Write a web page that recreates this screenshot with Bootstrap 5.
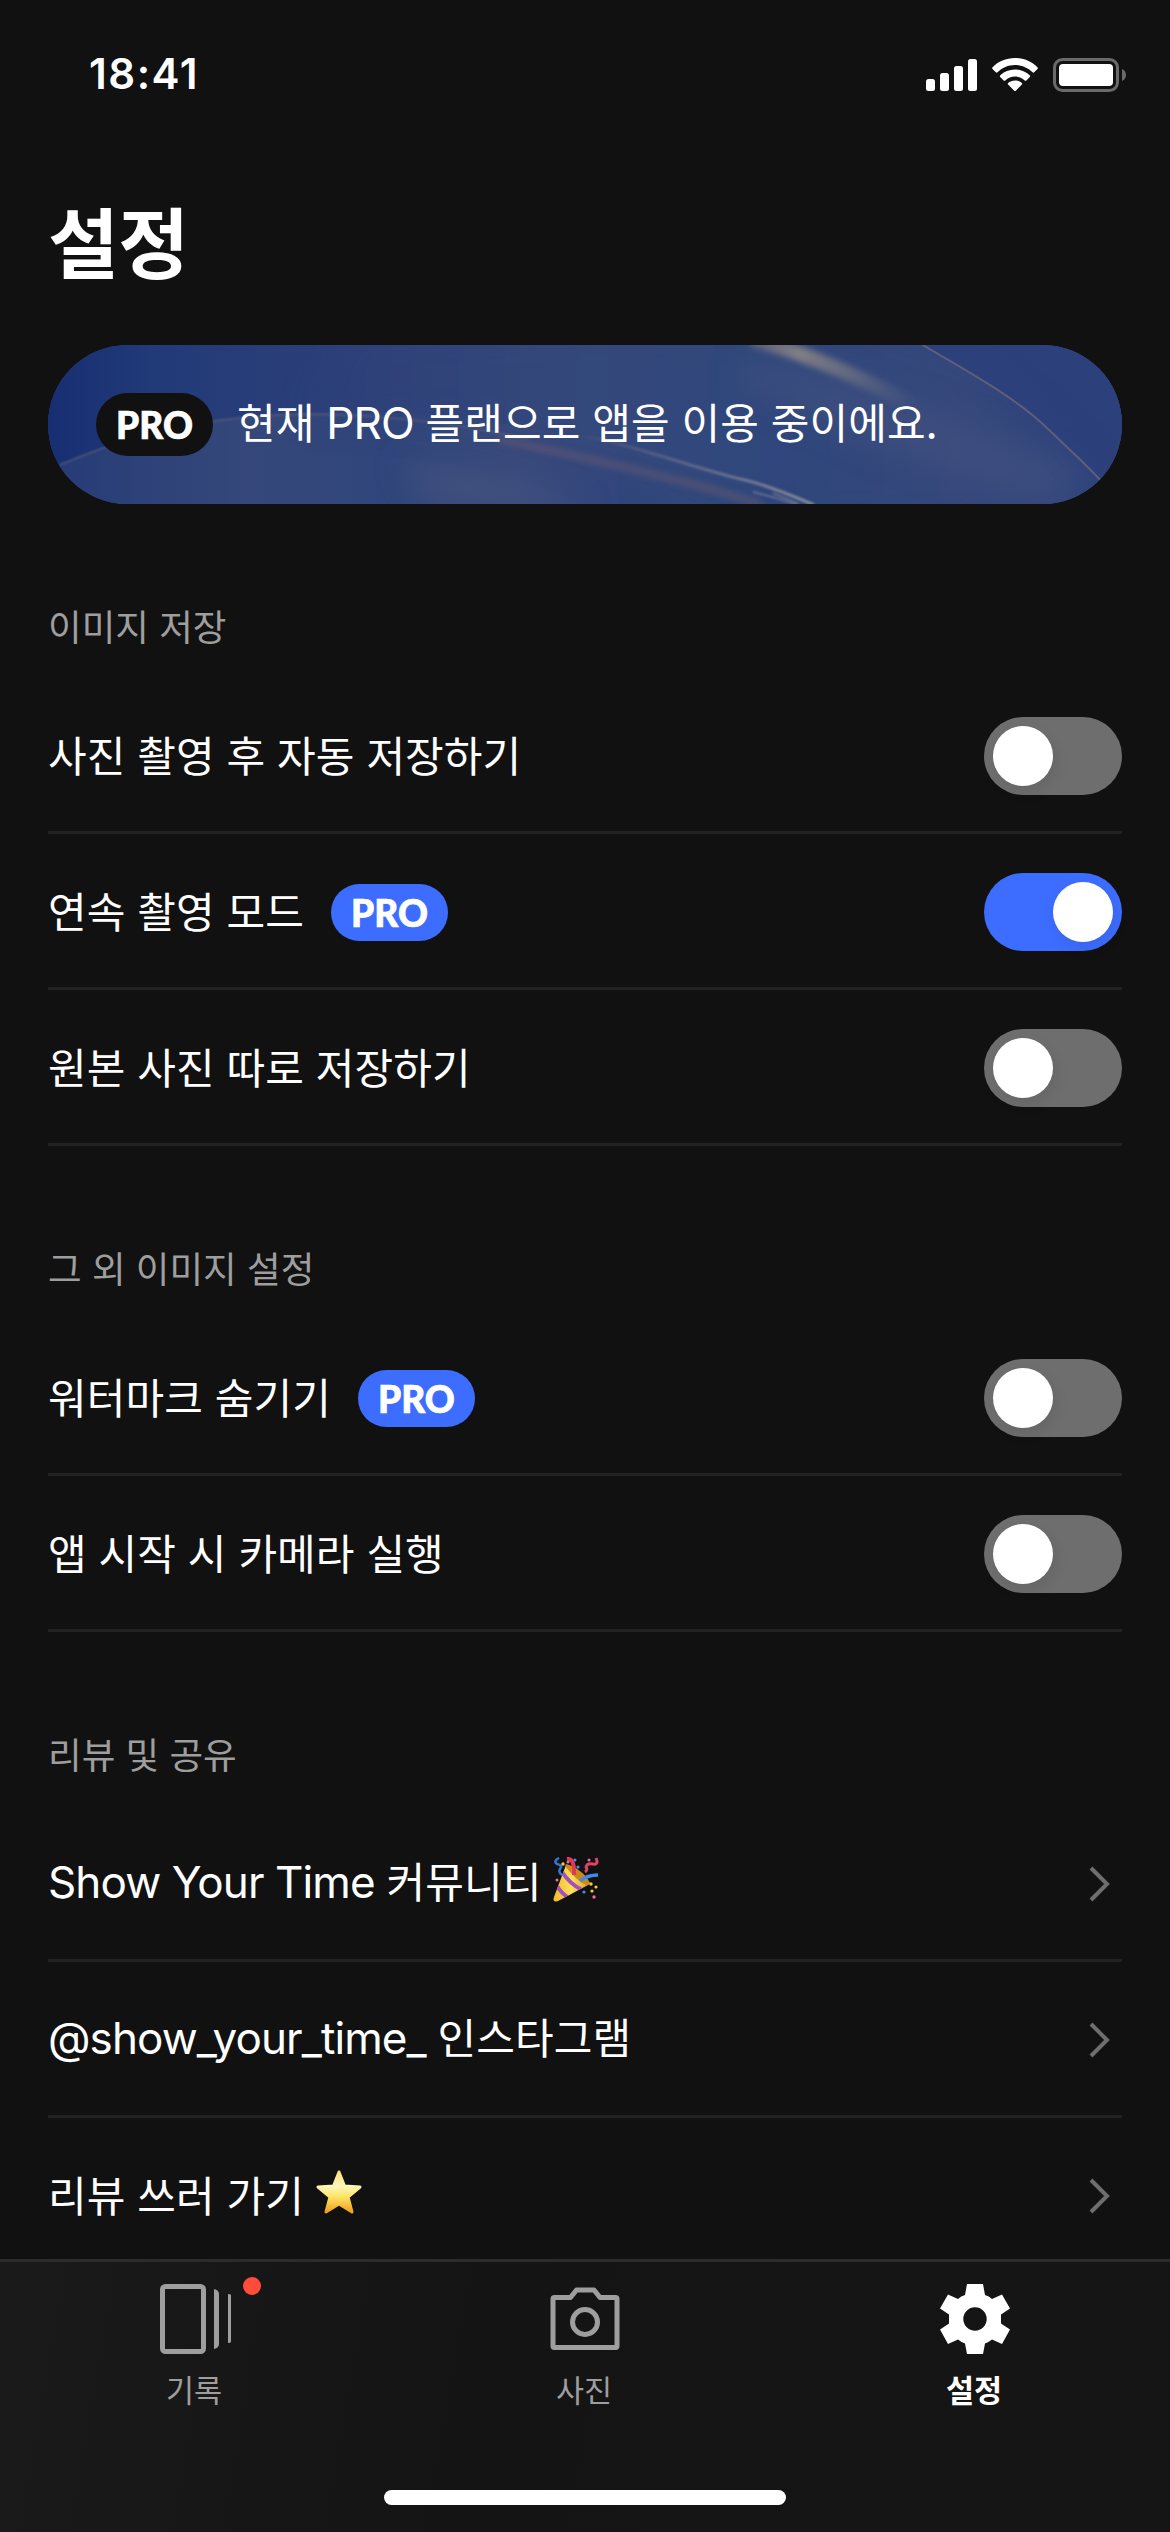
<!DOCTYPE html>
<html lang="ko" data-bs-theme="dark">
<head>
<meta charset="utf-8">
<meta name="viewport" content="width=device-width, initial-scale=1">
<title>설정</title>
<link href="https://cdn.jsdelivr.net/npm/bootstrap@5.3.0/dist/css/bootstrap.min.css" rel="stylesheet">
<style>
  :root { --ui-blue: #3d6dff; --ui-bg: #111; --ui-gray: #9e9e9e; }
  html, body { height: 2532px; overflow: hidden; }
  body { background: var(--ui-bg); color: #fff; font-family: "Noto Sans CJK KR", sans-serif; font-size: 42px; line-height: 1; }
  svg { display: block; flex: none; }
  .screen { width: 1170px; height: 2532px; }
  .status { height: 150px; padding: 0 44px 0 89px; }
  .clock { font: 600 42px/1 Inter, sans-serif; letter-spacing: 1.5px; padding-bottom: 3px; }
  .status-icons { gap: 15px; }
  .page-title { font-size: 77px; font-weight: 700; line-height: 90px; letter-spacing: -.6px; margin: 45px 0 60px; }
  .side { padding: 0 48px; }
  .plan { height: 159px; border-radius: 80px; padding: 0 48px; gap: 24px; background: #2f4680; position: relative; overflow: hidden; }
  .plan > * { position: relative; }
  .plan > .plan-art { position: absolute; left: 0; top: 0; }
  .pro { width: 117px; height: 57px; border-radius: 29px; background: var(--ui-blue); font: 900 37px/1 Lato, sans-serif; -webkit-text-stroke: .7px #fff; }
  .pro-dark { height: 63px; border-radius: 32px; background: var(--ui-bg); }
  .sect-name { height: 174px; padding-top: 103px; font-size: 36.6px; line-height: 38px; color: var(--ui-gray); font-weight: 400; margin: 0; }
  .setting { height: 156px; border-bottom: 3px solid #222; padding-top: 3px; gap: 27px; }
  .linkrow { gap: 12px; padding-right: 12px; }
  .linkrow .emoji { margin-bottom: 8px; }
  .label { white-space: nowrap; padding-bottom: 5px; letter-spacing: .08px; }
  .lat { font-family: Inter, sans-serif; font-size: 44px; letter-spacing: -.9px; }
  .toggle { width: 138px; height: 78px; border-radius: 39px; padding: 9px; background: #6e6e6e; }
  .toggle.on { background: var(--ui-blue); }
  .knob { width: 60px; height: 60px; border-radius: 50%; background: #fff; box-shadow: 3px 6px 15px rgba(0,0,0,.08); }
  .tabs { height: 273px; border-top: 3px solid #2c2c2c; background: linear-gradient(100deg, #1a1a1a 0, #141414 40%, #151515 100%); }
  .tab-item { color: var(--ui-gray); padding-top: 21px; font-size: 30.5px; }
  .tab-item.current { color: #fff; font-weight: 700; }
  .tab-text { line-height: 44px; margin-top: 12px; padding-right: 2px; }
  .tab-dot { position: absolute; width: 18px; height: 18px; border-radius: 50%; background: #ff4c3a; left: 84px; top: -6px; }
  .home { width: 402px; height: 15px; border-radius: 8px; background: #fff; margin-bottom: 27px; }
</style>
<script src="https://cdn.jsdelivr.net/npm/bootstrap@5.3.0/dist/js/bootstrap.bundle.min.js"></script>
</head>
<body>
<div class="screen d-flex flex-column">
  <header class="status d-flex align-items-center justify-content-between flex-shrink-0">
    <div class="clock">18:41</div>
    <div class="status-icons d-flex align-items-center">
      <svg width="51" height="34" viewBox="0 0 51 34" fill="#fff"><rect y="21" width="9" height="12" rx="2.5"/><rect x="14" y="15" width="9" height="18" rx="2.5"/><rect x="28" y="8" width="9" height="25" rx="2.5"/><rect x="42" y="1" width="9" height="32" rx="2.5"/></svg>
      <svg width="46" height="34" viewBox="0 0 46 34" fill="#fff"><path d="M23 0C32 0 40 3.500 45.400 9.200c.6.600.6 1.200.1 1.800l-3.300 3.300c-.5.500-1.200.5-1.700 0C35.900 9.800 29.800 7 23 7S10.100 9.800 5.500 14.300c-.5.500-1.200.5-1.700 0L.5 11c-.5-.6-.5-1.200.1-1.800C6 3.500 14 0 23 0z"/><path d="M23 11.500c5.700 0 10.900 2.200 14.700 5.800.6.500.6 1.200.1 1.700l-3.400 3.400c-.5.500-1.100.5-1.700.1C30.100 20 26.700 18.500 23 18.500s-7.100 1.500-9.700 4c-.6.400-1.200.4-1.700-.1L8.200 19c-.5-.5-.5-1.200.1-1.700C12.100 13.700 17.300 11.500 23 11.500z"/><path d="M23 22.500c2.700 0 5.100 1 6.900 2.500.5.500.5 1.100 0 1.600l-6.100 6.100c-.5.500-1.100.5-1.600 0l-6.100-6.100c-.5-.5-.5-1.100 0-1.600 1.800-1.500 4.200-2.500 6.900-2.500z"/></svg>
      <svg width="73" height="34" viewBox="0 0 73 34"><rect x="1.500" y="1.500" width="63" height="31" rx="8" fill="none" stroke="#6a6a6a" stroke-width="3"/><rect x="6" y="6" width="54" height="22" rx="4" fill="#fff"/><path d="M69 11c2.500 1 4 3.300 4 6s-1.500 5-4 6z" fill="#6a6a6a"/></svg>
    </div>
  </header>

  <main class="side flex-grow-1 overflow-hidden">
    <h1 class="page-title">설정</h1>

    <section class="plan d-flex align-items-center">
      <svg class="plan-art" width="1074" height="159" viewBox="0 0 1074 159">
        <defs>
          <linearGradient id="base"><stop offset="0" stop-color="#172f72"/><stop offset=".1" stop-color="#213a78"/><stop offset=".32" stop-color="#30427a"/><stop offset=".6" stop-color="#2f477c"/><stop offset="1" stop-color="#2e427b"/></linearGradient>
          <linearGradient id="sweep"><stop offset="0" stop-color="#2b3f78"/><stop offset=".35" stop-color="#3a4b7b"/><stop offset=".6" stop-color="#30477c"/><stop offset=".82" stop-color="#3d4d7d"/><stop offset="1" stop-color="#33467e"/></linearGradient>
          <linearGradient id="ray" gradientUnits="userSpaceOnUse" x1="695" y1="0" x2="870" y2="60"><stop offset="0" stop-color="#7a7580" stop-opacity=".5"/><stop offset=".3" stop-color="#8b8585" stop-opacity=".9"/><stop offset=".6" stop-color="#7d7c85" stop-opacity=".6"/><stop offset="1" stop-color="#6d7084" stop-opacity="0"/></linearGradient>
          <linearGradient id="thread" gradientUnits="userSpaceOnUse" x1="520" y1="0" x2="765" y2="0"><stop offset="0" stop-color="#6f728c" stop-opacity="0"/><stop offset=".5" stop-color="#74778e" stop-opacity=".7"/><stop offset="1" stop-color="#8a8c9c"/></linearGradient>
          <filter id="b1" x="-10%" y="-20%" width="120%" height="140%"><feGaussianBlur stdDeviation=".8"/></filter>
          <filter id="b3" x="-20%" y="-30%" width="140%" height="160%"><feGaussianBlur stdDeviation="3"/></filter>
          <filter id="b16" x="-20%" y="-50%" width="140%" height="200%"><feGaussianBlur stdDeviation="16"/></filter>
        </defs>
        <rect width="1074" height="159" fill="url(#base)"/>
        <path d="M11 120C60 98 110 80 190 73C300 60 440 70 570 100V159H0z" fill="url(#sweep)" opacity=".75"/>
        <path d="M300 -20H870C950 38 1010 80 1052 132L1030 179H640C540 105 420 75 260 72z" fill="url(#sweep)" opacity=".55" filter="url(#b16)"/>
        <path d="M700 10C850 40 960 100 1040 130L1000 159C890 130 780 80 690 40z" fill="#475482" opacity=".5" filter="url(#b16)"/>
        <path d="M350 115C430 125 500 145 550 159H380z" fill="#596283" opacity=".35" filter="url(#b16)"/>
        <path d="M11 120C65 98 120 79 200 72S380 72 480 94" fill="none" stroke="#66637c" stroke-width="2" opacity=".55" filter="url(#b1)"/>
        <path d="M450 94C530 112 630 132 715 160" fill="none" stroke="#5e5773" stroke-width="8" opacity=".65" filter="url(#b3)"/>
        <path d="M520 88C590 100 640 122 697 135C722 141 745 151 766 160" fill="none" stroke="url(#thread)" stroke-width="3" filter="url(#b1)"/>
        <path d="M705 147C722 151 738 156 748 160M725 148L751 159" fill="none" stroke="#747894" stroke-width="1.600" filter="url(#b1)"/>
        <path d="M703 -6Q770 10 870 62" stroke="url(#ray)" stroke-width="15" fill="none" filter="url(#b3)"/>
        <path d="M868 -4C915 24 966 51 998 82S1036 117 1054 137L1090 150V-8z" fill="#2c407b" opacity=".85"/>
        <path d="M868 -4C915 24 966 51 998 82S1036 117 1054 137" fill="none" stroke="#5f5d7a" stroke-width="2"/>
      </svg>
      <span class="pro pro-dark d-flex align-items-center justify-content-center flex-shrink-0">PRO</span>
      <span class="label">현재 <span class="lat">PRO</span> 플랜으로 앱을 이용 중이에요.</span>
    </section>

    <section>
      <h2 class="sect-name">이미지 저장</h2>
      <div class="setting d-flex align-items-center"><span class="label">사진 촬영 후 자동 저장하기</span><span class="toggle d-flex ms-auto"><span class="knob"></span></span></div>
      <div class="setting d-flex align-items-center"><span class="label">연속 촬영 모드</span><span class="pro d-flex align-items-center justify-content-center">PRO</span><span class="toggle on d-flex justify-content-end ms-auto"><span class="knob"></span></span></div>
      <div class="setting d-flex align-items-center"><span class="label">원본 사진 따로 저장하기</span><span class="toggle d-flex ms-auto"><span class="knob"></span></span></div>
    </section>

    <section>
      <h2 class="sect-name">그 외 이미지 설정</h2>
      <div class="setting d-flex align-items-center"><span class="label">워터마크 숨기기</span><span class="pro d-flex align-items-center justify-content-center">PRO</span><span class="toggle d-flex ms-auto"><span class="knob"></span></span></div>
      <div class="setting d-flex align-items-center"><span class="label">앱 시작 시 카메라 실행</span><span class="toggle d-flex ms-auto"><span class="knob"></span></span></div>
    </section>

    <section>
      <h2 class="sect-name">리뷰 및 공유</h2>
      <div class="setting linkrow d-flex align-items-center"><span class="label"><span class="lat">Show Your Time</span> 커뮤니티</span>
        <svg class="emoji" width="46" height="46" viewBox="0 0 46 46">
          <defs><linearGradient id="cone" x1="0" x2="1"><stop offset="0" stop-color="#f3b928"/><stop offset=".5" stop-color="#ffe15a"/><stop offset="1" stop-color="#d99a1c"/></linearGradient><clipPath id="cc"><path d="M13 8L37 27 5 44Q-1 46 1 40z"/></clipPath></defs>
          <path d="M13 8L37 27 5 44Q-1 46 1 40z" fill="url(#cone)"/>
          <g clip-path="url(#cc)" stroke="#a34fc0" stroke-width="4" fill="none"><path d="M9 15Q17 27 29 33M4 29Q9 37 16 41"/></g>
          <path d="M13 7C22 9 33 17 37 26 35 31 27 25 21 19S11 9 13 7z" fill="#c98a1b"/>
          <path d="M14 2q8-1 7 16" fill="none" stroke="#e23a55" stroke-width="4"/>
          <path d="M27 24Q34 18 45 18" fill="none" stroke="#3f8ce8" stroke-width="3.500"/>
          <path d="M6 1q-6 3-2 6 6 1 3 5-2 3 2 6" fill="none" stroke="#3274d8" stroke-width="2.500"/>
          <path d="M43 1q3 7-3 6t-7 3q2 3-1 5" fill="none" stroke="#dd426b" stroke-width="3"/>
          <g fill="#f6cb33"><circle cx="10" cy="7" r="1.700"/><circle cx="38" cy="27" r="1.700"/><circle cx="43" cy="30" r="1.600"/><circle cx="39" cy="34" r="1.600"/></g><g fill="#4a8ee6"><circle cx="22" cy="3" r="1.500"/><circle cx="25" cy="10" r="1.600"/><circle cx="31" cy="35" r="1.600"/></g><g fill="#ef6a9d"><circle cx="15" cy="5" r="1.500"/><circle cx="4" cy="23" r="1.500"/><circle cx="41" cy="40" r="1.700"/><circle cx="36" cy="3" r="1.500"/></g>
        </svg>
        <svg class="chev ms-auto" width="22" height="36" viewBox="0 0 22 36"><path d="M3 2L19 18 3 34" fill="none" stroke="#6e6e6e" stroke-width="4"/></svg></div>
      <div class="setting linkrow d-flex align-items-center"><span class="label"><span class="lat">@show_your_time_</span> 인스타그램</span>
        <svg class="chev ms-auto" width="22" height="36" viewBox="0 0 22 36"><path d="M3 2L19 18 3 34" fill="none" stroke="#6e6e6e" stroke-width="4"/></svg></div>
      <div class="setting linkrow d-flex align-items-center"><span class="label">리뷰 쓰러 가기</span>
        <svg class="emoji" width="46" height="46" viewBox="0 0 46 46"><defs><linearGradient id="star" x2="0" y2="1"><stop offset="0" stop-color="#ffdf7a"/><stop offset=".35" stop-color="#fff6bd"/><stop offset=".6" stop-color="#ffe66a"/><stop offset="1" stop-color="#f0a01c"/></linearGradient></defs><path d="M23 3L28.500 17 44 18 32 28 36 43 23 35 10 43 14 28 2 18 17.500 17z" fill="url(#star)" stroke="url(#star)" stroke-width="3" stroke-linejoin="round"/></svg>
        <svg class="chev ms-auto" width="22" height="36" viewBox="0 0 22 36"><path d="M3 2L19 18 3 34" fill="none" stroke="#6e6e6e" stroke-width="4"/></svg></div>
    </section>
  </main>

  <nav class="tabs d-flex flex-column flex-shrink-0">
    <div class="row g-0 flex-grow-1 text-center">
      <div class="col tab-item d-flex flex-column align-items-center">
        <div class="position-relative"><svg width="72" height="72" viewBox="0 0 72 72" fill="#9e9e9e"><rect x="3.500" y="3.500" width="41" height="65" rx="3" fill="none" stroke="#9e9e9e" stroke-width="5"/><path d="M55 6q5 1 5 5v50q0 4-5 5zM69 11q4 0 4 3v43q0 3-4 3z"/></svg><span class="tab-dot"></span></div>
        <div class="tab-text">기록</div>
      </div>
      <div class="col tab-item d-flex flex-column align-items-center">
        <svg width="72" height="72" viewBox="0 0 72 72" fill="none" stroke="#9e9e9e" stroke-width="5" stroke-linejoin="round"><path d="M5.500 14.500H21.500L27.500 7H45L51 14.500H66.500Q68 14.500 68 16V63Q68 64.500 66.500 64.500H5.500Q4 64.500 4 63V16Q4 14.500 5.500 14.500z"/><circle cx="36" cy="39" r="12.500"/></svg>
        <div class="tab-text">사진</div>
      </div>
      <div class="col tab-item current d-flex flex-column align-items-center">
        <svg width="72" height="72" viewBox="0 0 72 72" fill="#fff"><path fill-rule="evenodd" d="M28 1H44L46 12Q50 13 53 16L63 11.500 71 25.500 62 31.500V40.500L71 46.500 63 61 53 56.500Q50 59 46 60.500L44 71H28L26 60.500Q22 59 19 56.500L9 61 1 46.500 10 40.500V31.500L1 25.500 9 11.500 19 16Q22 13 26 12zM36 24.300a11.700 11.700 0 1 0 0 23.400 11.700 11.700 0 1 0 0-23.400z"/></svg>
        <div class="tab-text">설정</div>
      </div>
    </div>
    <div class="home align-self-center"></div>
  </nav>
</div>
</body>
</html>
